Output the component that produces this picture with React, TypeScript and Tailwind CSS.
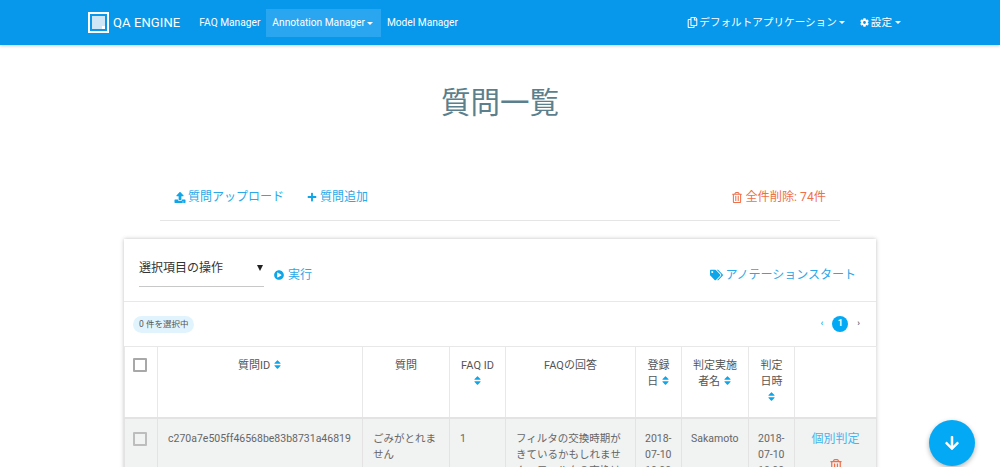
import React from 'react';
import { FaArrowDown, FaCog, FaPlayCircle, FaPlus, FaRegCopy, FaRegTrashAlt, FaSort, FaTags, FaUpload } from 'react-icons/fa';

const Caret = ({ className = 'ml-1' }: { className?: string }) => (
  <span className={`inline-block align-middle border-x-[3px] border-x-transparent border-t-[3px] border-t-white ${className}`} />
);

const Sort = () => <FaSort className="inline-block text-[#0ea5e9] w-[9px] h-[11px] align-[-1px]" />;

const Logo = () => (
  <svg width="21" height="21" viewBox="0 0 21 21" className="shrink-0">
    <rect x="1" y="1" width="19" height="19" fill="none" stroke="#fff" strokeWidth="2" />
    <path d="M4 4h13v10l-3 3H4z" fill="#cfe6f7" />
    <path d="M17 17h-3v-3h3z" fill="#fff" />
  </svg>
);

const Th = ({ children, className = '' }: { children?: React.ReactNode; className?: string }) => (
  <th className={`border border-[#e8e8e8] px-3 pt-[11px] align-top font-normal text-center text-[11px] leading-[16px] text-[#555] ${className}`}>
    {children}
  </th>
);

const Td = ({ children, className = '' }: { children?: React.ReactNode; className?: string }) => (
  <td className={`border border-[#e3e3e3] px-[10px] pt-[12px] align-top text-[10.5px] leading-[16px] text-[#666] ${className}`}>
    {children}
  </td>
);

const App = () => {
  return (
    <div className="relative h-[467px] w-[1000px] overflow-hidden bg-white font-['Roboto','Noto_Sans_CJK_JP',sans-serif]">
      <nav className="flex h-[45px] items-center bg-[#0798ec] pl-[88px] pr-[99px] text-[10.2px] text-white shadow-[0_1px_3px_rgba(0,0,0,0.2)]">
        <div className="flex items-center gap-[4px]">
          <Logo />
          <span className="text-[13px] tracking-[0.1px]">QA ENGINE</span>
        </div>
        <a className="ml-[19px] pt-px">FAQ Manager</a>
        <a className="ml-[6px] flex h-[28px] items-center bg-[#2aa5ef] pl-[6px] pr-[8px] pt-px">
          Annotation Manager
          <Caret className="ml-[2px]" />
        </a>
        <a className="ml-[6px] pt-px">Model Manager</a>
        <div className="ml-auto flex items-center pt-px text-[10.6px]">
          <FaRegCopy className="mr-[1px] h-[11px] w-[11px]" />
          <span>デフォルトアプリケーション</span>
          <Caret className="ml-[2px]" />
          <FaCog className="ml-[15px] mr-[2px] h-[9px] w-[9px]" />
          <span>設定</span>
          <Caret className="ml-[3px]" />
        </div>
      </nav>

      <h1 className="mt-[38px] text-center text-[29.5px] leading-[40px] text-[#5b7f8c]">質問一覧</h1>

      <div className="mx-[160px] mt-[47px] flex h-[51px] items-start justify-between border-b border-[#e5e5e5] px-[14px] pt-[18px] text-[12px] leading-[18px]">
        <div className="flex items-center text-[#2aa8e8]">
          <FaUpload className="mr-[2px] h-[11px] w-[12px] text-[#0ea5e9]" />
          <span>質問アップロード</span>
          <FaPlus className="ml-[23px] mr-[3px] h-[10px] w-[10px] text-[#0ea5e9]" />
          <span>質問追加</span>
        </div>
        <div className="flex items-center text-[12.2px] text-[#ef6f4a]">
          <FaRegTrashAlt className="mr-[3px] h-[11px] w-[10px]" />
          <span>全件削除: 74件</span>
        </div>
      </div>

      <section className="mx-[124px] mt-[18px] h-[400px] bg-white shadow-[0_0_4px_rgba(0,0,0,0.25)]">
        <div className="flex h-[63px] items-start border-b border-[#e8e8e8] pl-[15px] pr-[20px]">
          <div className="mt-[18px] flex h-[30px] w-[125px] items-start justify-between border-b border-[#c8c8c8] pr-[1px] pt-px text-[12px] leading-[20px] text-[#333]">
            <span>選択項目の操作</span>
            <span className="mt-[7px] h-0 w-0 border-x-[3.5px] border-t-[6px] border-x-transparent border-t-[#222]" />
          </div>
          <div className="ml-[10px] mt-[27px] flex items-center text-[12px] leading-[18px] text-[#2aa8e8]">
            <FaPlayCircle className="mr-[4px] h-[10px] w-[10px] text-[#0ea5e9]" />
            実行
          </div>
          <div className="ml-auto mt-[27px] flex items-center text-[12px] leading-[18px] text-[#2aa8e8]">
            <FaTags className="mr-[3px] h-[12px] w-[13px] text-[#0ea5e9]" />
            アノテーションスタート
          </div>
        </div>

        <div className="flex h-[44px] items-center justify-between pl-[9px] pr-[16px]">
          <span className="rounded-full bg-[#e1f4fd] px-[6px] py-[2px] text-[8.5px] leading-[13px] text-[#555]">0 件を選択中</span>
          <div className="flex items-center gap-[9px] text-[9px] font-bold text-[#666]">
            <span className="text-[#2aa8e8]">‹</span>
            <span className="flex h-[16px] w-[16px] items-center justify-center rounded-full bg-[#03a9f4] text-[9px] font-bold text-white">1</span>
            <span>›</span>
          </div>
        </div>

        <table className="w-[752px] table-fixed border-collapse">
          <colgroup>
            <col className="w-[33px]" />
            <col className="w-[205px]" />
            <col className="w-[87px]" />
            <col className="w-[56px]" />
            <col className="w-[130px]" />
            <col className="w-[46px]" />
            <col className="w-[67px]" />
            <col className="w-[46px]" />
            <col className="w-[82px]" />
          </colgroup>
          <thead>
            <tr className="h-[71px] border-b-2 border-[#e3e3e3]">
              <Th className="!px-0 !pt-[11px]">
                <span className="ml-[8px] block h-[14px] w-[14px] rounded-[1px] border-2 border-[#a8a8a8]" />
              </Th>
              <Th>質問ID <Sort /></Th>
              <Th>質問</Th>
              <Th className="!px-[4px]">FAQ ID<br /><Sort /></Th>
              <Th>FAQの回答</Th>
              <Th className="!px-[6px]">登録<br />日 <Sort /></Th>
              <Th className="!px-[6px]">判定実施<br />者名 <Sort /></Th>
              <Th className="!px-[6px]">判定<br />日時<br /><Sort /></Th>
              <Th />
            </tr>
          </thead>
          <tbody>
            <tr className="h-[100px] bg-[#f1f2f2]">
              <Td className="!px-0 !pt-[13px]">
                <span className="ml-[8px] block h-[14px] w-[14px] rounded-[1px] border-2 border-[#bdbdbd]" />
              </Td>
              <Td>c270a7e505ff46568be83b8731a46819</Td>
              <Td>ごみがとれません</Td>
              <Td>1</Td>
              <Td>フィルタの交換時期がきているかもしれません。フィルタの交換は</Td>
              <Td className="!px-[9px]">2018-07-10 10:00</Td>
              <Td className="!px-[9px]">Sakamoto</Td>
              <Td className="!px-[9px]">2018-07-10 10:00</Td>
              <Td className="text-center !px-0 !text-[12px] !text-[#45b4ec]">
                個別判定
                <FaRegTrashAlt className="mx-auto mt-[12px] h-[13px] w-[12px] text-[#ef6f4a]" />
              </Td>
            </tr>
          </tbody>
        </table>
      </section>

      <button className="absolute left-[929px] top-[420px] flex h-[46px] w-[46px] items-center justify-center rounded-full bg-[#03a9f4] text-white shadow-[0_2px_5px_rgba(0,0,0,0.3)]">
        <FaArrowDown className="h-[16px] w-[16px]" />
      </button>
    </div>
  );
};

export default App;
